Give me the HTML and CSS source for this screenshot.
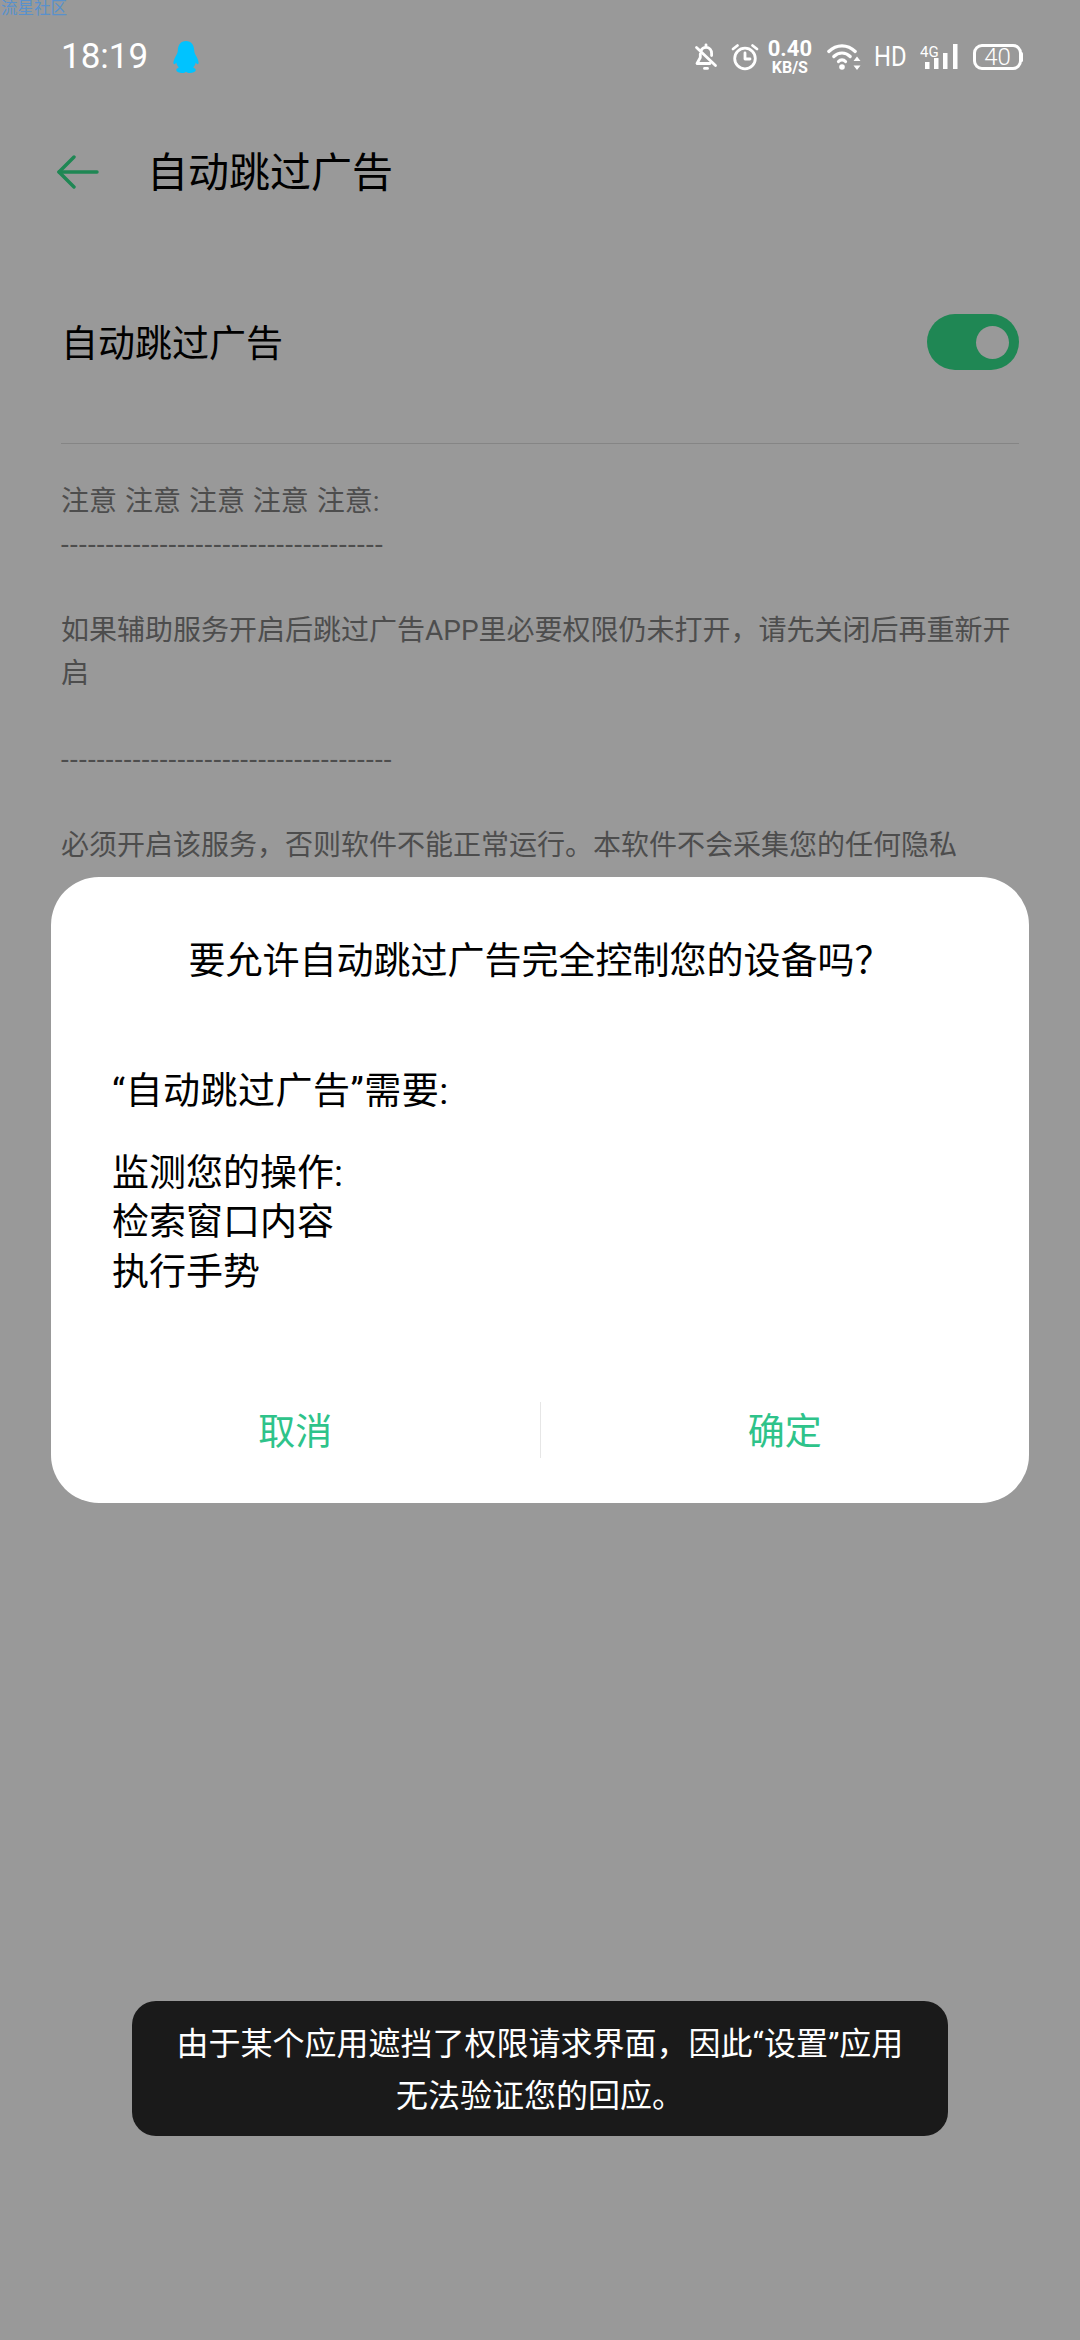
FILE: index.html
```html
<!DOCTYPE html>
<html lang="zh-CN">
<head>
    <meta charset="UTF-8">
    <meta name="viewport" content="width=device-width, initial-scale=1.0">
    <title>自动跳过广告</title>
    <link rel="stylesheet" href="styles.css">
</head>
<body>
    <div class="watermark">流星社区</div>

    <div class="status-bar">
        <div class="status-left">
            <span class="clock">18:19</span>
            <svg class="qq-icon" width="26" height="32" viewBox="0 0 26 32">
                <path fill="#00c3ff" d="M13 0C7.6 0 5 4 4.8 9.500C4.700 12 3.600 13.500 2.400 15.800C.8 18.800 0 21.500.6 22.800C1.100 23.700 2.300 23 3.300 21.600C3.700 23.500 4.500 25.200 5.800 26.500C4 27.300 3 28.300 3.300 29.500C3.700 31 6.500 32 9 32C10.800 32 12.200 31.500 13 30.700C13.800 31.500 15.200 32 17 32C19.500 32 22.300 31 22.700 29.500C23 28.300 22 27.300 20.200 26.500C21.500 25.200 22.300 23.500 22.700 21.600C23.700 23 24.900 23.700 25.400 22.800C26 21.500 25.200 18.800 23.600 15.800C22.400 13.500 21.300 12 21.200 9.500C21 4 18.400 0 13 0Z"/>
            </svg>
        </div>
        <div class="status-right">
            <svg class="icon-bell" width="24" height="28" viewBox="0 0 24 28" fill="none" stroke="#fff" stroke-width="2.800" stroke-linecap="round" stroke-linejoin="round">
                <path d="M7 7.500C8 5.500 9.800 4.400 12 4.400C15.600 4.400 17.600 7 17.600 10.500V12.500"/>
                <path d="M6.300 11V14.500L3 20.500H16"/>
                <path d="M12 1.800V3"/>
                <path d="M2.500 4.500L21.500 22.500"/>
                <path d="M10.500 25.400H13.500"/>
            </svg>
            <svg class="icon-alarm" width="28" height="28" viewBox="0 0 28 28" fill="none" stroke="#fff" stroke-width="2.800" stroke-linecap="round" stroke-linejoin="round">
                <circle cx="14" cy="15.500" r="10.300"/>
                <path d="M14 10V16H19"/>
                <path d="M2 6L6.500 2.500"/>
                <path d="M26 6L21.500 2.500"/>
            </svg>
            <div class="net-speed">
                <span class="net-value">0.40</span>
                <span class="net-unit">KB/S</span>
            </div>
            <svg class="icon-wifi" width="34" height="28" viewBox="0 0 34 28" fill="none" stroke="#fff" stroke-width="3.200" stroke-linecap="round">
                <path d="M1.800 8.500C9.500 1 20.500 1 28.200 8.500"/>
                <path d="M6.800 13.500C11.500 8.800 18.500 8.800 23.200 13.500"/>
                <path d="M11.500 18.500C13.500 16.300 16.500 16.300 18.500 18.500"/>
                <circle cx="15" cy="24" r="2.800" fill="#fff" stroke="none"/>
                <path fill="#fff" stroke="none" d="M30 13.500L33.500 18H26.500ZM30 27L26.500 22.500H33.500Z"/>
            </svg>
            <span class="hd-label">HD</span>
            <svg class="icon-signal" width="38" height="34" viewBox="0 0 38 34" fill="#fff">
                <text x="0" y="17" class="signal-text">4G</text>
                <rect x="5" y="22" width="4.500" height="7"/>
                <rect x="14" y="18" width="4.500" height="11"/>
                <rect x="23" y="13" width="4.500" height="16"/>
                <rect x="33" y="4" width="4.500" height="25"/>
            </svg>
            <div class="battery">40</div>
        </div>
    </div>

    <div class="toolbar">
        <svg width="42" height="36" viewBox="0 0 42 36" fill="none" stroke="#1f8754" stroke-width="3.400" stroke-linecap="round" stroke-linejoin="round">
            <path d="M40 18H2"/>
            <path d="M17 3L2 18L17 33"/>
        </svg>
        <h1 class="page-title">自动跳过广告</h1>
    </div>

    <div class="settings">
        <div class="switch-row">
            <span class="switch-label">自动跳过广告</span>
            <div class="switch"><div class="switch-knob"></div></div>
        </div>
        <div class="notes">
            <p class="notes-head">注意 注意 注意 注意 注意:</p>
            <p class="dashes">------------------------------------</p>
            <p>&nbsp;</p>
            <p>如果辅助服务开启后跳过广告APP里必要权限仍未打开，请先关闭后再重新开启</p>
            <p>&nbsp;</p>
            <p class="dashes">-------------------------------------</p>
            <p>&nbsp;</p>
            <p>必须开启该服务，否则软件不能正常运行。本软件不会采集您的任何隐私</p>
        </div>
    </div>

    <div class="dialog">
        <div class="dialog-title">要允许自动跳过广告完全控制您的设备吗？</div>
        <div class="dialog-body">
            <p class="dialog-lead">“自动跳过广告”需要:</p>
            <p>监测您的操作:<br>检索窗口内容<br>执行手势</p>
        </div>
        <div class="dialog-buttons">
            <div class="dialog-button">取消</div>
            <div class="dialog-divider"></div>
            <div class="dialog-button">确定</div>
        </div>
    </div>

    <div class="toast">由于某个应用遮挡了权限请求界面，因此“设置”应用<br>无法验证您的回应。</div>
</body>
</html>
```

FILE: styles.css
```css
html, body {
    margin: 0;
    padding: 0;
}
body {
    position: relative;
    width: 1080px;
    height: 2340px;
    overflow: hidden;
    background-color: #999;
    color: #000;
    font-family: Roboto, "Noto Sans CJK SC", sans-serif;
}
p {
    margin: 0;
}
.watermark {
    position: absolute;
    top: 0;
    left: 1px;
    font-size: 16.500px;
    line-height: 17px;
    color: #4a90d9;
    opacity: 0.8;
}

/* status bar */
.status-bar {
    display: flex;
    justify-content: space-between;
    align-items: center;
    height: 114px;
    padding: 0 58px 0 61px;
    color: #fff;
}
.status-left, .status-right {
    display: flex;
    align-items: center;
}
.clock {
    font-size: 35px;
    line-height: 40px;
}
.qq-icon {
    margin-left: 25px;
}
.icon-alarm {
    margin-left: 13px;
}
.net-speed {
    display: flex;
    flex-direction: column;
    align-items: center;
    margin-left: 9px;
    font-weight: 700;
}
.net-value {
    font-size: 22px;
    line-height: 22px;
}
.net-unit {
    font-size: 16px;
    line-height: 16px;
}
.icon-wifi {
    margin-left: 15px;
}
.hd-label {
    width: 32px;
    margin-left: 13px;
    font-size: 28px;
    line-height: 30px;
    transform: scaleX(0.85);
    transform-origin: left center;
}
.icon-signal {
    margin-left: 14px;
}
.signal-text {
    font-size: 15px;
}
.battery {
    position: relative;
    width: 43px;
    height: 20px;
    margin-left: 15px;
    border: 3px solid #fff;
    border-radius: 9px;
    font-size: 24px;
    font-weight: 300;
    line-height: 20px;
    text-align: center;
}
.battery::after {
    content: "";
    position: absolute;
    top: 5px;
    right: -4px;
    width: 3px;
    height: 10px;
    background-color: #fff;
    border-radius: 2px;
}

/* toolbar */
.toolbar {
    display: flex;
    align-items: center;
    height: 116px;
    padding-left: 57px;
}
.page-title {
    margin: 0 0 0 48px;
    padding-bottom: 6px;
    font-size: 41px;
    font-weight: 400;
}

/* settings */
.settings {
    padding: 0 61px 0 61px;
}
.switch-row {
    display: flex;
    justify-content: space-between;
    align-items: center;
    height: 114px;
    margin-top: 55px;
    padding-bottom: 44px;
    border-bottom: 1px solid #858585;
}
.switch-label {
    padding-bottom: 3px;
    font-size: 37px;
}
.switch {
    display: flex;
    justify-content: flex-end;
    align-items: center;
    box-sizing: border-box;
    width: 92px;
    height: 56px;
    padding-right: 10px;
    background-color: #1f8754;
    border-radius: 28px;
}
.switch-knob {
    width: 33px;
    height: 33px;
    background-color: #999;
    border-radius: 50%;
}
.notes {
    padding-top: 36px;
    font-size: 28px;
    line-height: 43px;
    color: #4d4d4d;
}
.notes-head {
    word-spacing: 1px;
}
.dashes {
    letter-spacing: 1.230px;
}

/* permission dialog */
.dialog {
    position: absolute;
    top: 877px;
    left: 51px;
    display: flex;
    flex-direction: column;
    width: 978px;
    height: 626px;
    background-color: #fff;
    border-radius: 48px;
}
.dialog-title {
    padding-top: 60px;
    font-size: 37px;
    line-height: 50px;
    text-align: center;
}
.dialog-body {
    margin-top: 80px;
    padding: 0 61px;
    font-size: 37px;
    line-height: 49.500px;
}
.dialog-lead {
    margin-bottom: 32px;
    letter-spacing: 0.500px;
}
.dialog-buttons {
    display: flex;
    align-items: center;
    height: 56px;
    margin: auto 0 45px;
}
.dialog-button {
    flex: 1;
    padding-top: 6px;
    font-size: 37px;
    line-height: 50px;
    text-align: center;
    color: #2ec38a;
}
.dialog-divider {
    width: 1px;
    height: 56px;
    background-color: #e6e6e6;
}

/* toast */
.toast {
    position: absolute;
    top: 2001px;
    left: 132px;
    box-sizing: border-box;
    width: 816px;
    height: 135px;
    padding-top: 17px;
    background-color: #1a1a1a;
    border-radius: 24px;
    font-size: 32px;
    line-height: 52px;
    text-align: center;
    color: #fff;
}
```
